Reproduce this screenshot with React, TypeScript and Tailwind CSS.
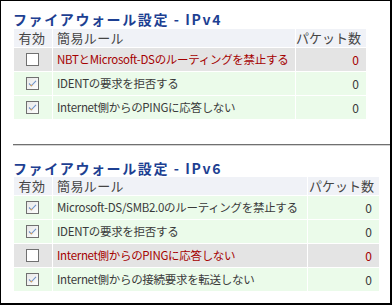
import React from "react";

type Row = { on: boolean; text: string; count: number };

const v4: Row[] = [
  { on: false, text: "NBTとMicrosoft-DSのルーティングを禁止する", count: 0 },
  { on: true, text: "IDENTの要求を拒否する", count: 0 },
  { on: true, text: "Internet側からのPINGに応答しない", count: 0 },
];

const v6: Row[] = [
  { on: true, text: "Microsoft-DS/SMB2.0のルーティングを禁止する", count: 0 },
  { on: true, text: "IDENTの要求を拒否する", count: 0 },
  { on: false, text: "Internet側からのPINGに応答しない", count: 0 },
  { on: true, text: "Internet側からの接続要求を転送しない", count: 0 },
];

function Check({ on }: { on: boolean }) {
  return (
    <svg width="13" height="13" viewBox="0 0 13 13">
      <defs>
        <linearGradient id="cbg" x1="0" y1="0" x2="1" y2="1">
          <stop offset="0" stopColor="#e6e6e6" />
          <stop offset="1" stopColor="#ffffff" />
        </linearGradient>
      </defs>
      <rect x="0.5" y="0.5" width="12" height="12" fill={on ? "url(#cbg)" : "#ffffff"} stroke="#707070" />
      {on && (
        <>
          <path d="M3 6.5 L5.3 8.8 L10 3.8" fill="none" stroke="#6f93c9" strokeWidth="1.1" />
          <path d="M4.6 8.1 L5.3 8.8 L6.2 7.9" fill="none" stroke="#d9a05a" strokeWidth="1.1" />
        </>
      )}
    </svg>
  );
}

function Table({ rows, cols }: { rows: Row[]; cols: string }) {
  return (
    <div className={`grid ${cols} gap-px ml-px`}>
      <div className="h-[18px] bg-[#f0f2f7] flex items-center justify-center text-[13px] tracking-[0.5px] text-[#444] pr-[2px]">有効</div>
      <div className="h-[18px] bg-[#f0f2f7] flex items-center pl-[4px] text-[13px] tracking-[0.4px] text-[#444]">簡易ルール</div>
      <div className="h-[18px] bg-[#f0f2f7] flex items-center justify-end pr-[5px] text-[13px] text-[#444] whitespace-nowrap">パケット数</div>
      {rows.map((r, i) => {
        const bg = r.on ? "bg-[#ebfbea]" : "bg-[#e4e4e4]";
        const tc = r.on ? "text-[#3a3a3a]" : "text-[#a40000]";
        return (
          <React.Fragment key={i}>
            <div className={`h-[23px] ${bg} flex items-center justify-center pr-[1px]`}>
              <Check on={r.on} />
            </div>
            <div className={`h-[23px] ${bg} ${tc} flex items-center pl-[4px] text-[11.5px] tracking-[-0.3px] whitespace-nowrap`}>
              {r.text}
            </div>
            <div className={`h-[23px] ${bg} ${tc} flex items-center justify-end pr-[7px] text-[12px]`}>
              {r.count}
            </div>
          </React.Fragment>
        );
      })}
    </div>
  );
}

export default function App() {
  return (
    <div
      className="w-[392px] h-[305px] bg-white border-t border-l border-r-2 border-b-2 border-black overflow-hidden"
      style={{ fontFamily: '"Noto Sans CJK JP", "Noto Sans", sans-serif' }}
    >
      <div className="pl-[12px] pt-[10px]">
        <div className="h-[16px] leading-[16px] text-[14px] font-bold tracking-[1.6px] text-[#1d3f92] whitespace-nowrap">
          ファイアウォール設定 - IPv4
        </div>
        <div className="mt-[2px]">
          <Table rows={v4} cols="grid-cols-[38px_242px_70px]" />
        </div>
        <div className="mt-[25px] h-[2px] border-t border-[#707070] border-b border-b-[#d4d4d4]" />
        <div className="mt-[14px] h-[16px] leading-[16px] text-[14px] font-bold tracking-[1.6px] text-[#1d3f92] whitespace-nowrap">
          ファイアウォール設定 - IPv6
        </div>
        <div className="mt-[1px]">
          <Table rows={v6} cols="grid-cols-[38px_254px_71px]" />
        </div>
      </div>
    </div>
  );
}
